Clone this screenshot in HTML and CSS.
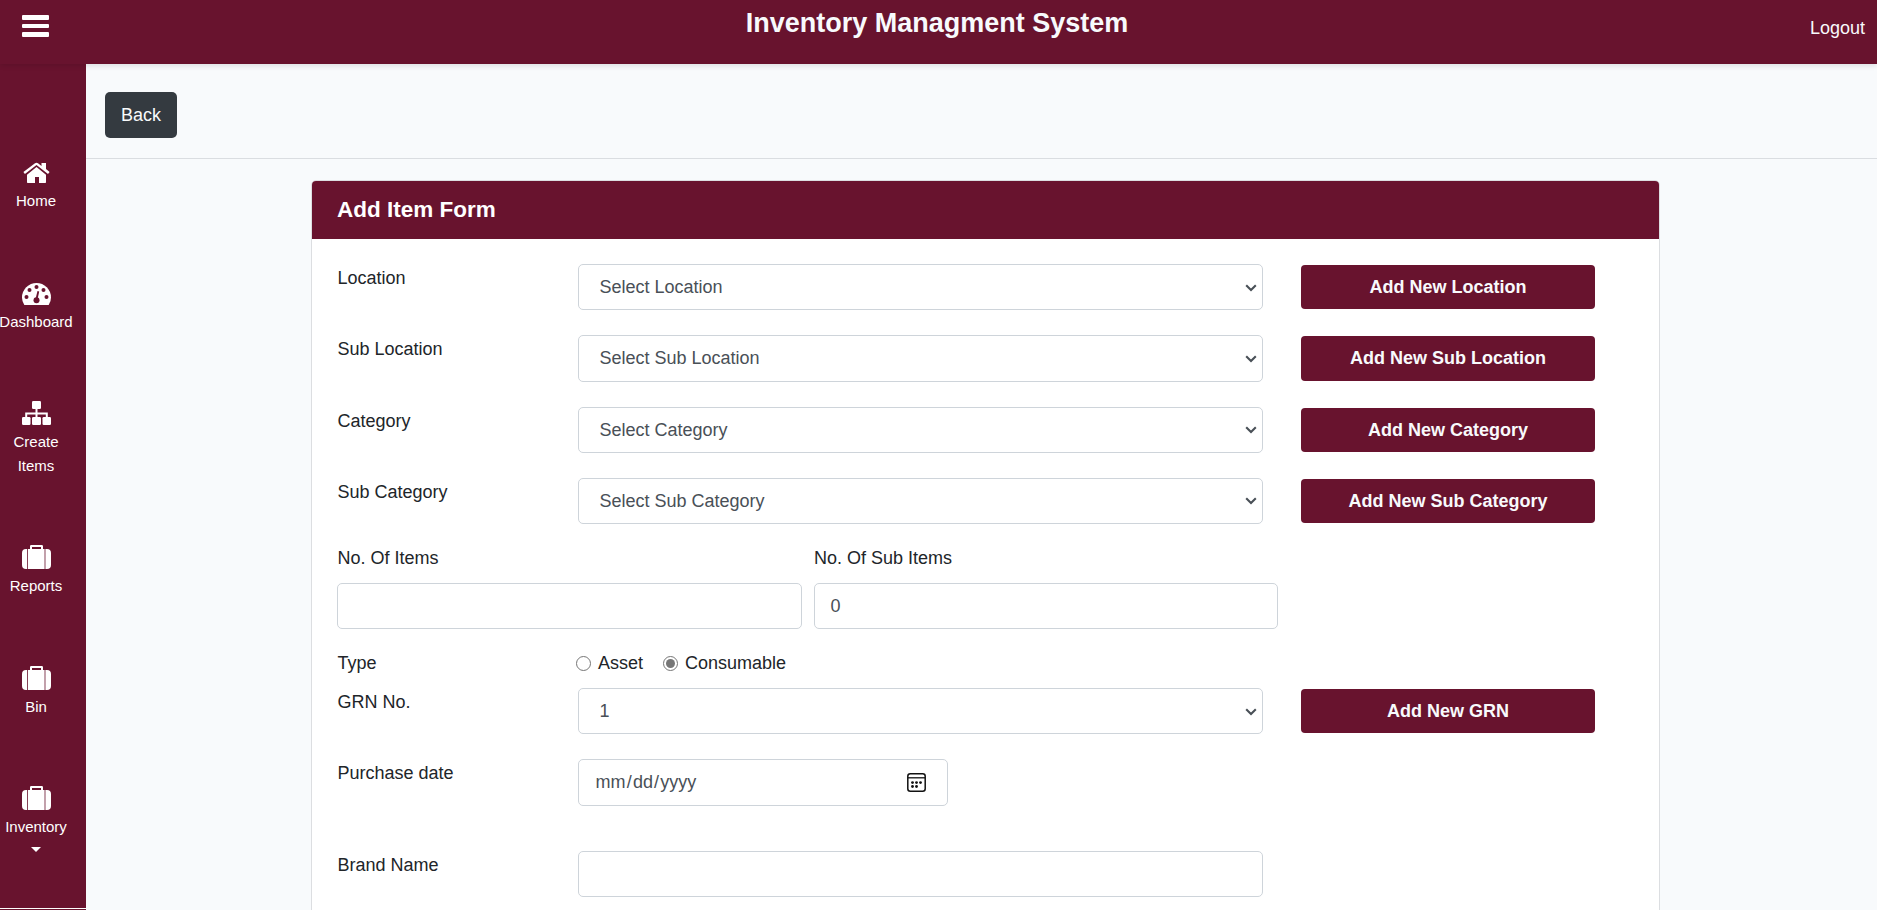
FILE: index.html
```html
<!DOCTYPE html>
<html lang="en">
<head>
<meta charset="utf-8">
<title>Inventory Managment System</title>
<link rel="stylesheet" href="styles.css">
</head>
<body>
<svg class="defs" aria-hidden="true">
  <symbol id="suitcase" viewBox="0 0 29 24">
    <path fill-rule="evenodd" d="M6 4V24H22.600V4H21V1.200Q21 0 19.800 0H9.200Q8 0 8 1.200V4ZM10 2h9v2h-9Z"/>
    <path d="M5.200 4v20H4Q0 24 0 20V8Q0 4 4 4ZM23.400 4v20H25Q29 24 29 20V8Q29 4 25 4Z"/>
  </symbol>
  <symbol id="chevron" viewBox="0 0 12 8"><path d="M1.200 1.300 6 6l4.800-4.700" fill="none" stroke="#495057" stroke-width="2.100"/></symbol>
</svg>
<header class="topbar">
  <button class="menu" aria-label="Menu"><span></span><span></span><span></span></button>
  <h1 class="brand">Inventory Managment System</h1>
  <a class="logout">Logout</a>
</header>
<div class="layout">
  <nav class="sidebar">
    <a class="nav-item">
      <svg class="nav-icon" viewBox="0 0 29 24"><path d="M14.500 7 24 14.800v7.500q0 .7-.7.7H17v-6h-4v6H5.700q-.7 0-.7-.7v-7.500Z"/><path d="M19.500 3H24v6l3.600 3.100-1.600 2L14.500 5 2.900 14.100 1.400 12.100 13 3.200q1.500-1.100 3 0l3.500 2.800Z"/></svg>
      <span>Home</span>
    </a>
    <a class="nav-item dashboard">
      <svg class="nav-icon" viewBox="0 0 29 24"><path d="M2.300 24Q0 20.500 0 16.500a14.500 14.500 0 0 1 29 0Q29 20.500 26.700 24Z"/><g fill="#68132e"><circle cx="4.500" cy="16" r="2"/><circle cx="7.500" cy="9" r="2"/><circle cx="14.500" cy="6" r="2"/><circle cx="21.500" cy="9" r="2"/><circle cx="24.500" cy="16" r="2"/><circle cx="14.500" cy="19.200" r="3"/><path d="m13.500 18 2-8 1.700.4-1.700 8Z"/></g></svg>
      <span>Dashboard</span>
    </a>
    <a class="nav-item">
      <svg class="nav-icon" viewBox="0 0 29 24"><rect x="10" width="9" height="8" rx="1.200"/><rect y="16" width="8.500" height="8" rx="1.200"/><rect x="10" y="16" width="9" height="8" rx="1.200"/><rect x="20.500" y="16" width="8.500" height="8" rx="1.200"/><path d="M4.200 16v-3.500h20.600V16M14.500 8v8" fill="none" stroke="#fff" stroke-width="2"/></svg>
      <span>Create<br>Items</span>
    </a>
    <a class="nav-item"><svg class="nav-icon"><use href="#suitcase"/></svg><span>Reports</span></a>
    <a class="nav-item"><svg class="nav-icon"><use href="#suitcase"/></svg><span>Bin</span></a>
    <a class="nav-item"><svg class="nav-icon"><use href="#suitcase"/></svg><span>Inventory</span><i class="caret"></i></a>
  </nav>
  <main class="content">
    <div class="toolbar"><a class="back">Back</a></div>
    <section class="card">
      <h2 class="card-title">Add Item Form</h2>
      <form class="card-body">
        <div class="row"><label>Location</label><div class="field select"><span>Select Location</span><svg class="chevron"><use href="#chevron"/></svg></div><a class="add">Add New Location</a></div>
        <div class="row"><label>Sub Location</label><div class="field select"><span>Select Sub Location</span><svg class="chevron"><use href="#chevron"/></svg></div><a class="add">Add New Sub Location</a></div>
        <div class="row"><label>Category</label><div class="field select"><span>Select Category</span><svg class="chevron"><use href="#chevron"/></svg></div><a class="add">Add New Category</a></div>
        <div class="row"><label>Sub Category</label><div class="field select"><span>Select Sub Category</span><svg class="chevron"><use href="#chevron"/></svg></div><a class="add">Add New Sub Category</a></div>
        <div class="counts">
          <div class="count"><label>No. Of Items</label><div class="field"></div></div>
          <div class="count"><label>No. Of Sub Items</label><div class="field">0</div></div>
        </div>
        <div class="types">
          <label>Type</label>
          <span class="radio"></span><span class="asset">Asset</span>
          <span class="radio checked"></span><span>Consumable</span>
        </div>
        <div class="row"><label>GRN No.</label><div class="field select"><span>1</span><svg class="chevron"><use href="#chevron"/></svg></div><a class="add">Add New GRN</a></div>
        <div class="row date-row"><label>Purchase date</label><div class="field date"><span class="date-text">mm<i>/</i>dd<i>/</i>yyyy</span>
          <svg class="calendar" viewBox="0 0 19 19"><rect x=".8" y=".8" width="17.400" height="17.400" rx="2.500" fill="none" stroke="#111" stroke-width="1.500"/><path d="M1 4.800h17" stroke="#111" stroke-width="1.300"/><g fill="#111"><circle cx="5.500" cy="9.600" r="1.400"/><circle cx="9.500" cy="9.600" r="1.400"/><circle cx="13.500" cy="9.600" r="1.400"/><circle cx="5.500" cy="13.500" r="1.400"/><circle cx="9.500" cy="13.500" r="1.400"/></g></svg></div></div>
        <div class="row"><label>Brand Name</label><div class="field"></div></div>
      </form>
    </section>
  </main>
</div>
</body>
</html>
```

FILE: styles.css
```css
* { box-sizing: border-box; }

body {
  margin: 0;
  height: 910px;
  overflow: hidden;
  background: #f8fafc;
  color: #212529;
  font: 18px/27px "Liberation Sans", Arial, sans-serif;
}

.defs { display: none; }

.topbar {
  position: relative;
  z-index: 1;
  display: grid;
  grid-template-columns: 300px 1fr 300px;
  height: 64px;
  padding: 0 12px 0 22px;
  background: #68132e;
  color: #f8fafc;
  box-shadow: 0 2px 5px rgba(0, 0, 0, .1);
}

.menu {
  display: flex;
  flex-direction: column;
  gap: 4px;
  width: 27px;
  margin-top: 15px;
  padding: 0;
  border: 0;
  background: none;
  align-self: start;
}

.menu span { width: 27px; height: 4.7px; border-radius: 1px; background: #fff; }

.brand { margin: 6px 0 0; padding-right: 13px; text-align: center; font-size: 27px; line-height: 34px; }

.logout { justify-self: end; margin-top: 15px; }

.layout { display: flex; height: 846px; }

.sidebar {
  flex: none;
  width: 86px;
  height: 845px;
  padding-top: 96px;
  background: #68132e;
  border-bottom: 1px solid #fff;
  box-shadow: 0 1px #68132e;
  color: #fff;
  font-size: 15px;
  line-height: 24px;
}

.nav-item {
  display: flex;
  flex-direction: column;
  align-items: center;
  width: 73px;
  margin-bottom: 66.400px;
  text-align: center;
}

.nav-item span { margin: -1px 1px 1px 0; }

.nav-icon { width: 29px; height: 24px; margin: 0 0 6px; fill: #fff; }
.dashboard .nav-icon { margin: 1px 0 5px; }
.dashboard span { margin: 0 1px 0 0; }

.caret { margin: 7px 1px 0 0; border: 5px solid transparent; border-top-color: #fff; border-bottom: 0; }

.content { flex: 1; }

.toolbar { height: 95px; padding: 28px 19px; border-bottom: 1px solid #dadde1; }

.back {
  display: block;
  width: 72px;
  height: 46px;
  border-radius: 5px;
  background: #343a40;
  color: #f8fafc;
  line-height: 46px;
  text-align: center;
}

.card {
  width: 1349px;
  height: 760px;
  margin: 21px 0 0 225px;
  border: 1px solid #dcdee1;
  border-radius: 5px 5px 0 0;
  background: #fff;
}

.card-title {
  height: 58px;
  margin: 0;
  padding-left: 25px;
  border-radius: 4px 4px 0 0;
  background: #68132e;
  color: #fff;
  font-size: 22.500px;
  line-height: 57px;
}

.card-body { padding: 25px 25px 0; }

.row {
  display: grid;
  grid-template-columns: 241px 685px 294px;
  height: 46.250px;
  margin-bottom: 25px;
}

.row label { padding: 1px 0 0 .5px; }

.field {
  height: 46.250px;
  padding: 0 17px;
  border: 1px solid #ced4da;
  border-radius: 5px;
  background: #fff;
  color: #495057;
  line-height: 44px;
}

.select { display: flex; align-items: center; justify-content: space-between; padding: 0 5px 0 20.500px; }

.chevron { width: 12px; height: 8px; margin-top: 1px; }

.add {
  height: 44.250px;
  margin: 1px 0 0 38px;
  width: 294px;
  border-radius: 4px;
  background: #68132e;
  color: #f8fafc;
  font-weight: bold;
  line-height: 44px;
  text-align: center;
}

.counts { display: flex; gap: 12px; height: 85px; margin-top: -5px; }
.count { width: 464.500px; }
.count label { display: block; height: 39px; padding: 1px 0 0 .5px; }
.count .field { padding: 0 16px; }

.types { display: flex; align-items: center; height: 27px; margin: 21px 0 11px; }
.types label { width: 238.500px; padding-left: .5px; }

.radio {
  width: 15px;
  height: 15px;
  margin-right: 7.500px;
  border: 1px solid #767676;
  border-radius: 50%;
}

.asset { margin-right: 19.500px; }
.checked { padding: 2px; background: #767676 content-box; }

.date-row { margin-bottom: 45.250px; }
.date { display: flex; align-items: center; justify-content: space-between; width: 370px; padding: 0 21px 0 16.500px; }
.date-text i { margin: 0 1.200px; font-style: normal; }
.calendar { width: 19px; height: 19px; }
```
